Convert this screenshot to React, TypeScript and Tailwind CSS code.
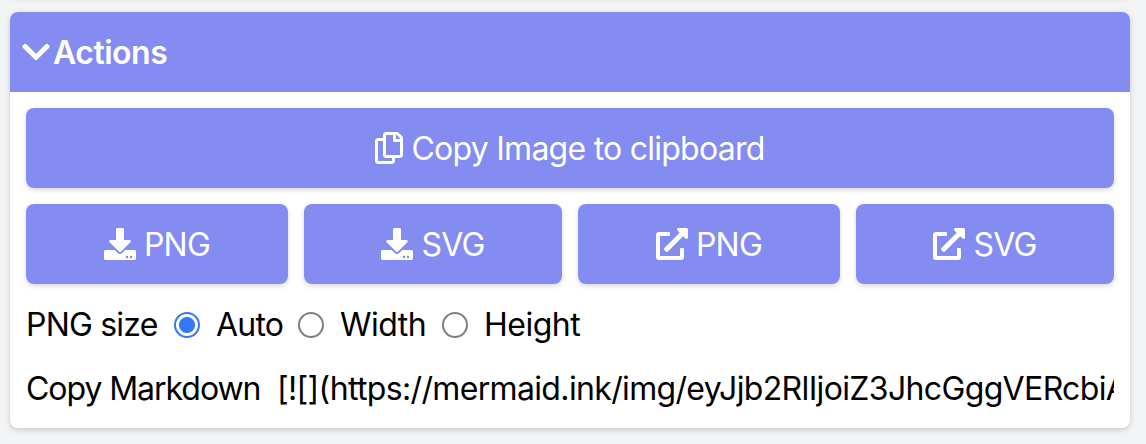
import { useState } from 'react';
import type { ReactNode } from 'react';
import { FaChevronDown, FaDownload, FaExternalLinkAlt, FaRegCopy } from 'react-icons/fa';

const buttonShadow = 'shadow-[0_2px_6px_0_rgba(0,0,0,0.1),0_2px_4px_0_rgba(0,0,0,0.06)]';
const cardShadow = 'shadow-[0_2px_10px_0_rgba(0,0,0,0.09),0_2px_4px_0_rgba(0,0,0,0.09)]';

function Button({ className, icon, children }: { className: string; icon: ReactNode; children: ReactNode }) {
  return (
    <button
      className={`flex h-20 items-center justify-center gap-2 rounded-lg bg-[#848cf1] text-[32px] text-white ${buttonShadow} ${className}`}
    >
      {icon}
      <span className="pt-px">{children}</span>
    </button>
  );
}

function SizeOption({ label, className, checked, onSelect }: { label: string; className: string; checked: boolean; onSelect: () => void }) {
  return (
    <label className={`flex items-center ${className}`}>
      <input
        type="radio"
        name="size"
        checked={checked}
        onChange={onSelect}
        className="mr-4 mt-0.5 size-[26px] shrink-0 appearance-none rounded-full border-2 border-[#808080] bg-white checked:border-[#3478f6] checked:bg-[radial-gradient(circle,#3478f6_7.5px,white_8.5px)] checked:bg-origin-border"
      />
      <span className="pt-0.5">{label}</span>
    </label>
  );
}

export default function App() {
  const [size, setSize] = useState('Auto');

  return (
    <div className="h-[444px] overflow-hidden bg-[#f3f4f6] px-[10px] font-['Inter',sans-serif] font-[430] text-black">
      <div className={`-mt-5 mb-4 h-4 w-[1120px] rounded-lg bg-white ${cardShadow}`} />
      <section className={`h-[416px] w-[1120px] overflow-hidden rounded-lg bg-white ${cardShadow}`}>
        <header className="flex h-20 items-center bg-[#848cf1] pl-3 text-[32px] font-semibold tracking-[-0.5px] text-white">
          <FaChevronDown className="mr-[3px] h-8 w-7" />
          <span className="pt-px">Actions</span>
        </header>
        <div className="p-4">
          <Button className="w-full tracking-[-0.75px]" icon={<FaRegCopy className="h-8 w-7" />}>
            Copy Image to clipboard
          </Button>
          <div className="mt-4 flex gap-4">
            <Button className="w-[262px] tracking-[-0.8px]" icon={<FaDownload className="size-8" />}>PNG</Button>
            <Button className="w-[258px] tracking-[-0.8px]" icon={<FaDownload className="size-8" />}>SVG</Button>
            <Button className="w-[262px] tracking-[-0.8px]" icon={<FaExternalLinkAlt className="size-8" />}>PNG</Button>
            <Button className="w-[258px] tracking-[-0.8px]" icon={<FaExternalLinkAlt className="size-8" />}>SVG</Button>
          </div>
          <div className="mt-4 flex h-12 items-center text-[32px] tracking-[-0.8px]">
            <span className="w-[148px] pt-0.5">PNG size</span>
            <SizeOption label="Auto" className="w-[124px]" checked={size === 'Auto'} onSelect={() => setSize('Auto')} />
            <SizeOption label="Width" className="w-[144px] tracking-[-0.5px]" checked={size === 'Width'} onSelect={() => setSize('Width')} />
            <SizeOption label="Height" className="tracking-[-0.5px]" checked={size === 'Height'} onSelect={() => setSize('Height')} />
          </div>
          <div className="mt-4 flex h-12 items-center text-[32px]">
            <span className="w-[251px] shrink-0 whitespace-nowrap pt-0.5 tracking-[-1.05px]">Copy Markdown</span>
            <input
              readOnly
              aria-label="Markdown"
              value="[![](https://mermaid.ink/img/eyJjb2RlIjoiZ3JhcGggVERcbiAg"
              className="min-w-0 flex-1 pt-0.5 tracking-[-0.65px] outline-none"
            />
          </div>
        </div>
      </section>
    </div>
  );
}
